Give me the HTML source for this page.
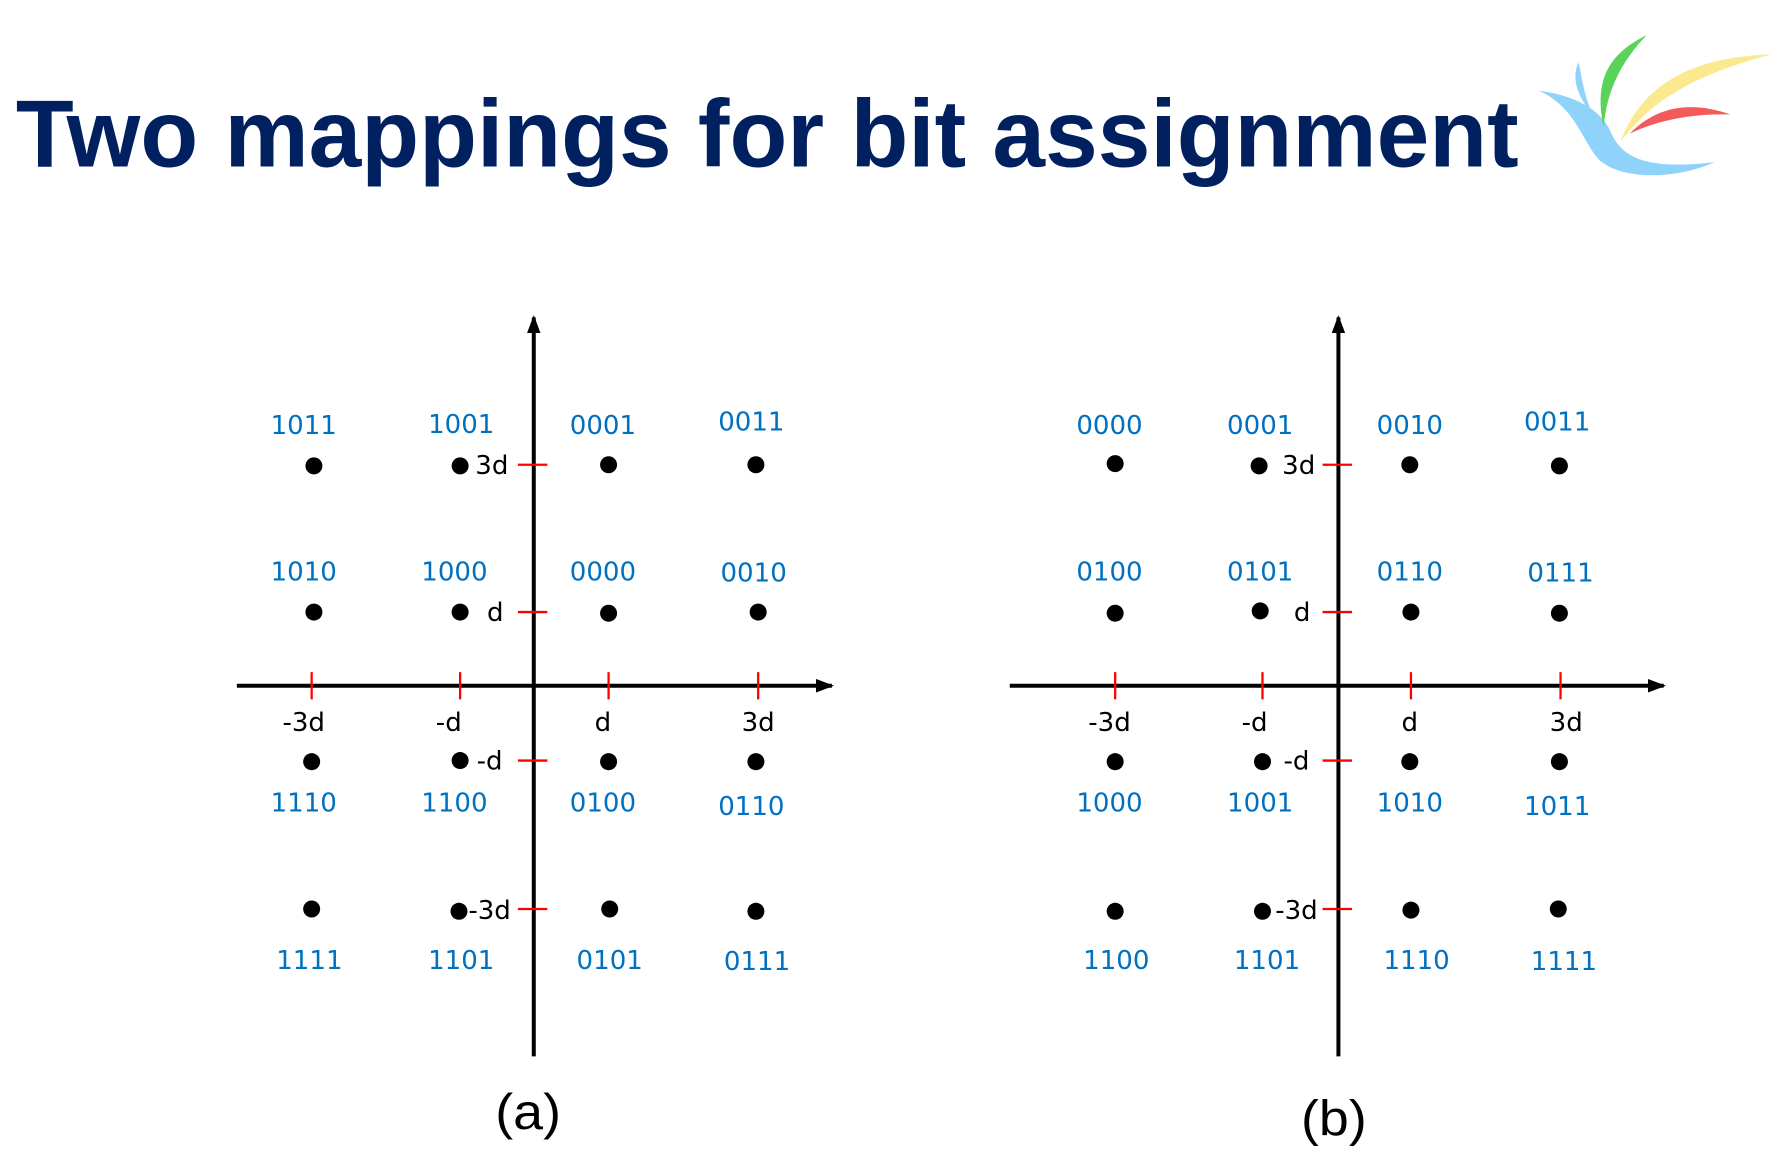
<!DOCTYPE html>
<html><head><meta charset="utf-8"><style>
html,body{margin:0;padding:0;background:#fff;width:1777px;height:1155px;overflow:hidden}
svg{display:block}
.t{font-family:"Liberation Sans",Arial,sans-serif;font-weight:bold;fill:#002060}
.b{font-family:"DejaVu Sans",Verdana,sans-serif;font-size:23px;fill:#0070c0;text-anchor:middle}
.k{font-family:"DejaVu Sans",Verdana,sans-serif;font-size:23px;fill:#000;text-anchor:middle}
.c{font-family:"Liberation Sans",sans-serif;font-size:44px;fill:#000;text-anchor:middle}
</style></head><body>
<svg width="1777" height="1155" viewBox="0 0 1568 1019" preserveAspectRatio="none" xmlns="http://www.w3.org/2000/svg">
<defs><marker id="ar" markerWidth="16" markerHeight="12" refX="14" refY="6" orient="auto" markerUnits="userSpaceOnUse"><path d="M0,0 L16,6 L0,12 Z" fill="#000"/></marker></defs>
<text class="t" x="14" y="147" font-size="84" textLength="1326" lengthAdjust="spacingAndGlyphs">Two mappings for bit assignment</text>
<!-- logo -->
<path d="M1358,80 C1395,85 1415,100 1422,118 C1432,140 1455,150 1513,143 C1480,158 1430,160 1410,140 C1395,122 1390,95 1358,80 Z" fill="#8fd3fb"/>
<path d="M1393,55 C1385,70 1395,90 1405,100 C1398,85 1396,70 1393,55 Z" fill="#8fd3fb"/>
<path d="M1453,31 C1425,45 1405,65 1415,112 C1418,80 1430,55 1453,31 Z" fill="#5ad35a"/>
<path d="M1563,48 C1500,50 1450,70 1430,125 C1460,85 1500,65 1563,48 Z" fill="#fbe98f"/>
<path d="M1527,101 C1490,88 1460,95 1438,118 C1465,105 1495,100 1527,101 Z" fill="#f55a5a"/>

<g stroke="#000" stroke-width="3.5" fill="none">
<line x1="471" y1="932" x2="471" y2="280" marker-end="url(#ar)"/>
<line x1="209" y1="605" x2="734" y2="605" marker-end="url(#ar)"/>
<line x1="1181" y1="932" x2="1181" y2="280" marker-end="url(#ar)"/>
<line x1="891" y1="605" x2="1468" y2="605" marker-end="url(#ar)"/>
</g>
<g stroke="#f00" stroke-width="2">
<path d="M457,410H483M457,540H483M457,671H483M457,802H483M275,593V617M406,593V617M537,593V617M669,593V617"/>
<path d="M1167,410H1193M1167,540H1193M1167,671H1193M1167,802H1193M984,593V617M1114,593V617M1245,593V617M1377,593V617"/>
</g>
<g fill="#000">
<circle cx="277" cy="411" r="7.5"/><circle cx="406" cy="411" r="7.5"/><circle cx="537" cy="410" r="7.5"/><circle cx="667" cy="410" r="7.5"/>
<circle cx="277" cy="540" r="7.5"/><circle cx="406" cy="540" r="7.5"/><circle cx="537" cy="541" r="7.5"/><circle cx="669" cy="540" r="7.5"/>
<circle cx="275" cy="672" r="7.5"/><circle cx="406" cy="671" r="7.5"/><circle cx="537" cy="672" r="7.5"/><circle cx="667" cy="672" r="7.5"/>
<circle cx="275" cy="802" r="7.5"/><circle cx="405" cy="804" r="7.5"/><circle cx="538" cy="802" r="7.5"/><circle cx="667" cy="804" r="7.5"/>
<circle cx="984" cy="409" r="7.5"/><circle cx="1111" cy="411" r="7.5"/><circle cx="1244" cy="410" r="7.5"/><circle cx="1376" cy="411" r="7.5"/>
<circle cx="984" cy="541" r="7.5"/><circle cx="1112" cy="539" r="7.5"/><circle cx="1245" cy="540" r="7.5"/><circle cx="1376" cy="541" r="7.5"/>
<circle cx="984" cy="672" r="7.5"/><circle cx="1114" cy="672" r="7.5"/><circle cx="1244" cy="672" r="7.5"/><circle cx="1376" cy="672" r="7.5"/>
<circle cx="984" cy="804" r="7.5"/><circle cx="1114" cy="804" r="7.5"/><circle cx="1245" cy="803" r="7.5"/><circle cx="1375" cy="802" r="7.5"/>
</g>
<g class="b">
<text x="268" y="383">1011</text><text x="407" y="382">1001</text><text x="532" y="383">0001</text><text x="663" y="380">0011</text>
<text x="268" y="512">1010</text><text x="401" y="512">1000</text><text x="532" y="512">0000</text><text x="665" y="513">0010</text>
<text x="268" y="716">1110</text><text x="401" y="716">1100</text><text x="532" y="716">0100</text><text x="663" y="719">0110</text>
<text x="273" y="855">1111</text><text x="407" y="855">1101</text><text x="538" y="855">0101</text><text x="668" y="856">0111</text>
<text x="979" y="383">0000</text><text x="1112" y="383">0001</text><text x="1244" y="383">0010</text><text x="1374" y="380">0011</text>
<text x="979" y="512">0100</text><text x="1112" y="512">0101</text><text x="1244" y="512">0110</text><text x="1377" y="513">0111</text>
<text x="979" y="716">1000</text><text x="1112" y="716">1001</text><text x="1244" y="716">1010</text><text x="1374" y="719">1011</text>
<text x="985" y="855">1100</text><text x="1118" y="855">1101</text><text x="1250" y="855">1110</text><text x="1380" y="856">1111</text>
</g>
<g class="k">
<text x="434" y="418">3d</text><text x="437" y="548">d</text><text x="432" y="679">-d</text><text x="432" y="811">-3d</text>
<text x="268" y="645">-3d</text><text x="396" y="645">-d</text><text x="532" y="645">d</text><text x="669" y="645">3d</text>
<text x="1146" y="418">3d</text><text x="1149" y="548">d</text><text x="1144" y="679">-d</text><text x="1144" y="811">-3d</text>
<text x="979" y="645">-3d</text><text x="1107" y="645">-d</text><text x="1244" y="645">d</text><text x="1382" y="645">3d</text>
</g>
<text class="c" x="466" y="996" textLength="58" lengthAdjust="spacingAndGlyphs">(a)</text>
<text class="c" x="1177" y="1002" textLength="58" lengthAdjust="spacingAndGlyphs">(b)</text>
</svg>
</body></html>
